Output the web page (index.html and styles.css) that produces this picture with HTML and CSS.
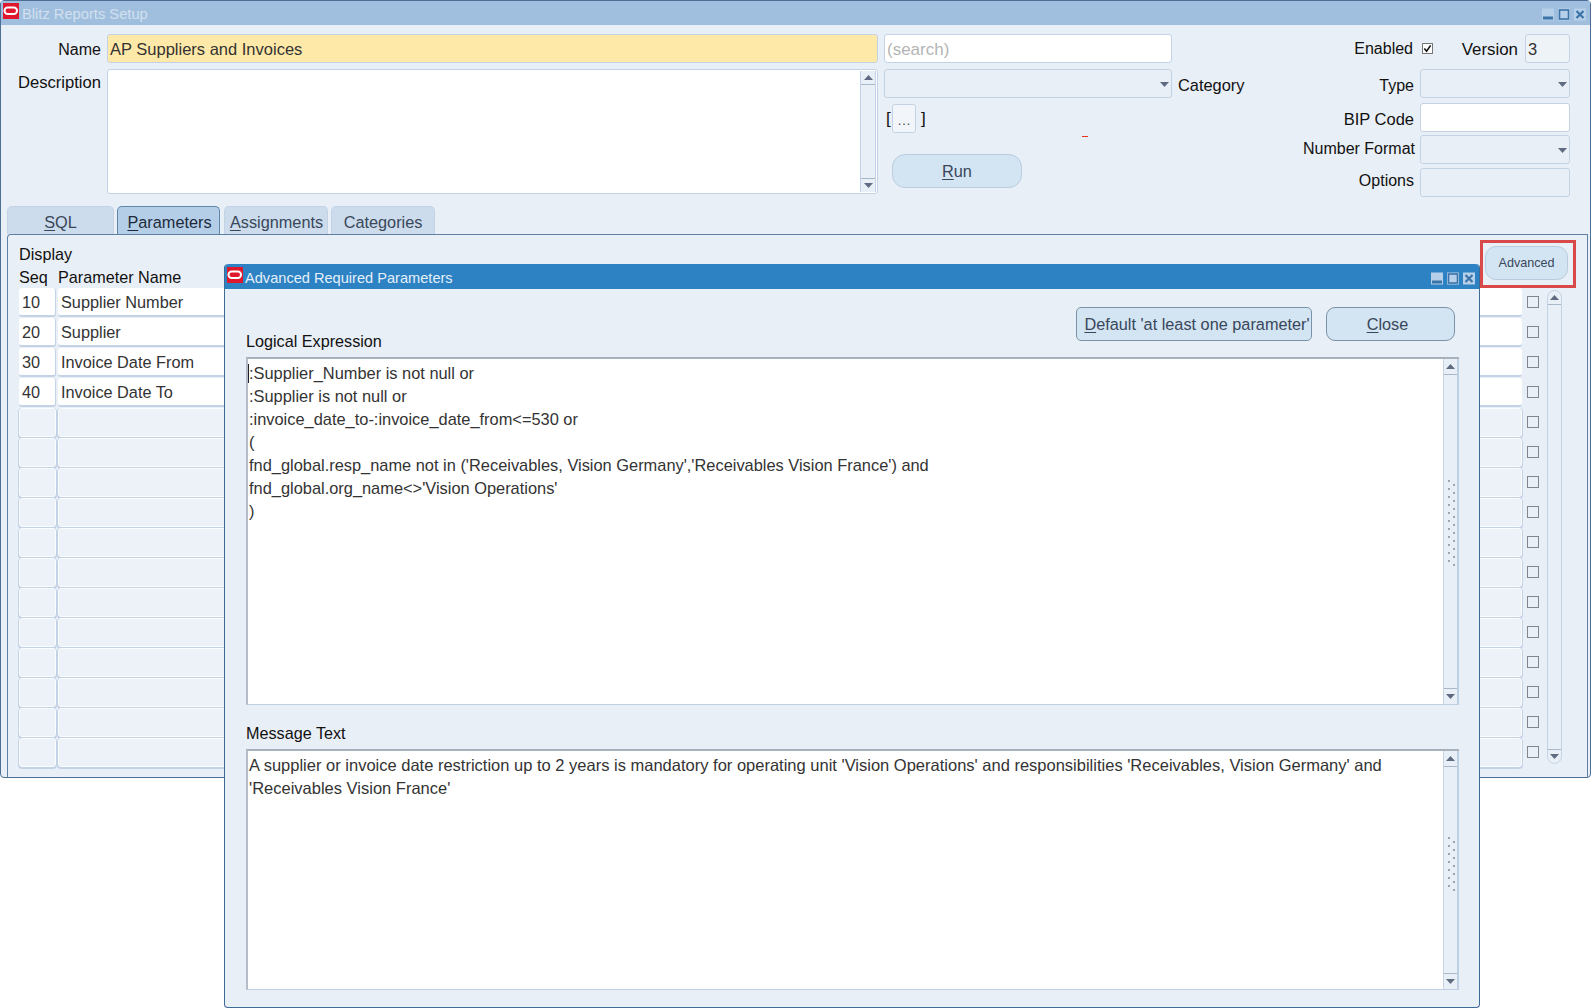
FILE: index.html
```html
<!DOCTYPE html>
<html lang="en">
<head>
<meta charset="utf-8">
<title>Blitz Reports Setup</title>
<link rel="stylesheet" href="styles.css">
</head>
<body>
<svg class="defs" width="0" height="0" aria-hidden="true">
  <symbol id="logo" viewBox="0 0 16 16"><rect width="16" height="16" fill="#e0182d"/><rect x="1.500" y="4.500" width="12.500" height="6.500" rx="3.200" fill="none" stroke="#fff" stroke-width="2"/></symbol>
  <symbol id="up" viewBox="0 0 9 5"><path d="M4.5 0L9 5H0z" fill="#5f6b80"/></symbol>
  <symbol id="down" viewBox="0 0 9 5"><path d="M0 0H9L4.500 5z" fill="#5f6b80"/></symbol>
  <symbol id="wmin" viewBox="0 0 12 12"><rect width="12" height="12" fill="#b6d0ea"/><rect x="1" y="8" width="10" height="3" fill="#3c74a8"/></symbol>
  <symbol id="wmax" viewBox="0 0 12 12"><rect width="12" height="12" fill="#b6d0ea"/><rect x="1.500" y="1.500" width="9" height="9" fill="none" stroke="#3c74a8" stroke-width="1.600"/></symbol>
  <symbol id="wclose" viewBox="0 0 12 12"><rect width="12" height="12" fill="#b6d0ea"/><path d="M2.500 2.500l7 7m0-7l-7 7" stroke="#3c74a8" stroke-width="2.200"/></symbol>
</svg>

<main class="window">
  <header class="titlebar">
    <svg class="logo"><use href="#logo"/></svg>
    <span class="title-text">Blitz Reports Setup</span>
    <span class="controls">
      <svg class="ctl"><use href="#wmin"/></svg><svg class="ctl"><use href="#wmax"/></svg><svg class="ctl"><use href="#wclose"/></svg>
    </span>
  </header>

  <section class="form">
    <div class="col-left">
      <div class="row-name">
        <label class="lbl lbl-left">Name</label>
        <div class="field field-yellow field-main">AP Suppliers and Invoices</div>
      </div>
      <div class="row-desc">
        <label class="lbl lbl-left lbl-desc">Description</label>
        <div class="field field-white field-main field-desc">
          <div class="vscroll vscroll-small">
            <span class="sb-btn sb-top"><svg class="arrow"><use href="#up"/></svg></span>
            <span class="sb-track"></span>
            <span class="sb-btn sb-bottom"><svg class="arrow"><use href="#down"/></svg></span>
          </div>
        </div>
      </div>
    </div>

    <div class="col-mid">
      <div class="field field-white field-search">(search)</div>
      <div class="row-cat">
        <div class="field field-select field-cat"><svg class="caret"><use href="#down"/></svg></div>
        <label class="lbl lbl-cat">Category</label>
      </div>
      <div class="row-browse">
        <span class="bracket">[</span>
        <span class="browse">…</span>
        <span class="bracket">]</span>
        <span class="red-dash"></span>
      </div>
      <button class="btn btn-run"><u>R</u>un</button>
    </div>

    <div class="col-right">
      <div class="row-top">
        <label class="lbl lbl-enabled">Enabled</label>
        <span class="check-on"><svg viewBox="0 0 10 10"><path d="M1.500 5l2.500 3 4.500-6.500" fill="none" stroke="#111" stroke-width="1.800"/></svg></span>
        <label class="lbl lbl-version">Version</label>
        <div class="field field-version">3</div>
      </div>
      <div class="row-r r-type"><label class="lbl">Type</label><div class="field field-select field-r"><svg class="caret"><use href="#down"/></svg></div></div>
      <div class="row-r r-bip"><label class="lbl">BIP Code</label><div class="field field-white field-r"></div></div>
      <div class="row-r r-num"><label class="lbl lbl-num">Number Format</label><div class="field field-select field-r"><svg class="caret"><use href="#down"/></svg></div></div>
      <div class="row-r r-opt"><label class="lbl">Options</label><div class="field field-r"></div></div>
    </div>
  </section>

  <nav class="tabs">
    <span class="tab tab-sql"><u>S</u>QL</span>
    <span class="tab tab-params tab-active"><u>P</u>arameters</span>
    <span class="tab tab-assign"><u>A</u>ssignments</span>
    <span class="tab tab-cats">Categories</span>
  </nav>

  <section class="pane">
    <div class="pane-head">
      <div class="heads">
        <div class="lbl-display">Display</div>
        <div class="col-heads"><span class="h-seq">Seq</span><span>Parameter Name</span></div>
      </div>
      <div class="adv-box"><button class="btn btn-adv">Advanced</button></div>
    </div>
    <div class="table-area">
      <div class="rows">
        <div class="tr"><span class="td td-seq">10</span><span class="td td-name">Supplier Number</span><span class="chk"></span></div>
        <div class="tr"><span class="td td-seq">20</span><span class="td td-name">Supplier</span><span class="chk"></span></div>
        <div class="tr"><span class="td td-seq">30</span><span class="td td-name">Invoice Date From</span><span class="chk"></span></div>
        <div class="tr"><span class="td td-seq">40</span><span class="td td-name">Invoice Date To</span><span class="chk"></span></div>
        <div class="tr"><span class="td td-seq td-empty"></span><span class="td td-name td-empty"></span><span class="chk"></span></div>
        <div class="tr"><span class="td td-seq td-empty"></span><span class="td td-name td-empty"></span><span class="chk"></span></div>
        <div class="tr"><span class="td td-seq td-empty"></span><span class="td td-name td-empty"></span><span class="chk"></span></div>
        <div class="tr"><span class="td td-seq td-empty"></span><span class="td td-name td-empty"></span><span class="chk"></span></div>
        <div class="tr"><span class="td td-seq td-empty"></span><span class="td td-name td-empty"></span><span class="chk"></span></div>
        <div class="tr"><span class="td td-seq td-empty"></span><span class="td td-name td-empty"></span><span class="chk"></span></div>
        <div class="tr"><span class="td td-seq td-empty"></span><span class="td td-name td-empty"></span><span class="chk"></span></div>
        <div class="tr"><span class="td td-seq td-empty"></span><span class="td td-name td-empty"></span><span class="chk"></span></div>
        <div class="tr"><span class="td td-seq td-empty"></span><span class="td td-name td-empty"></span><span class="chk"></span></div>
        <div class="tr"><span class="td td-seq td-empty"></span><span class="td td-name td-empty"></span><span class="chk"></span></div>
        <div class="tr"><span class="td td-seq td-empty"></span><span class="td td-name td-empty"></span><span class="chk"></span></div>
        <div class="tr"><span class="td td-seq td-empty"></span><span class="td td-name td-empty"></span><span class="chk"></span></div>
      </div>
      <div class="vscroll vscroll-table">
        <span class="sb-btn sb-top"><svg class="arrow"><use href="#up"/></svg></span>
        <span class="sb-track"></span>
        <span class="sb-btn sb-bottom"><svg class="arrow"><use href="#down"/></svg></span>
      </div>
    </div>
  </section>
</main>

<aside class="dialog">
  <header class="dlg-title">
    <svg class="logo"><use href="#logo"/></svg>
    <span class="dlg-title-text">Advanced Required Parameters</span>
    <span class="controls dlg-controls">
      <svg class="ctl"><use href="#wmin"/></svg><svg class="ctl"><use href="#wmax"/></svg><svg class="ctl"><use href="#wclose"/></svg>
    </span>
  </header>
  <div class="dlg-body">
    <div class="dlg-top">
      <div class="dlg-label dlg-label-first">Logical Expression</div>
      <button class="btn btn-default"><u>D</u>efault 'at least one parameter'</button>
      <button class="btn btn-close"><u>C</u>lose</button>
    </div>
    <div class="textbox textbox-logic">
      <div class="textbox-text"><span class="caret-bar"></span>:Supplier_Number is not null or<br>:Supplier is not null or<br>:invoice_date_to-:invoice_date_from&lt;=530 or<br>(<br>fnd_global.resp_name not in ('Receivables, Vision Germany','Receivables Vision France') and<br>fnd_global.org_name&lt;&gt;'Vision Operations'<br>)</div>
      <div class="vscroll vscroll-text">
        <span class="sb-btn sb-top"><svg class="arrow"><use href="#up"/></svg></span>
        <span class="sb-track sb-track-logic"><span class="dots dots-logic"></span></span>
        <span class="sb-btn sb-bottom"><svg class="arrow"><use href="#down"/></svg></span>
      </div>
    </div>
    <div class="dlg-label dlg-label-msg">Message Text</div>
    <div class="textbox textbox-msg">
      <div class="textbox-text">A supplier or invoice date restriction up to 2 years is mandatory for operating unit 'Vision Operations' and responsibilities 'Receivables, Vision Germany' and<br>'Receivables Vision France'</div>
      <div class="vscroll vscroll-text">
        <span class="sb-btn sb-top"><svg class="arrow"><use href="#up"/></svg></span>
        <span class="sb-track sb-track-msg"><span class="dots dots-msg"></span></span>
        <span class="sb-btn sb-bottom"><svg class="arrow"><use href="#down"/></svg></span>
      </div>
    </div>
  </div>
</aside>
</body>
</html>
```

FILE: styles.css
```css
* { box-sizing: border-box; }
html, body { margin: 0; padding: 0; background: #fff; }
body {
  position: relative;
  width: 1591px;
  height: 1008px;
  overflow: hidden;
  font: 16px/20px "Liberation Sans", Arial, sans-serif;
  color: #111;
}
.defs { position: absolute; }
u { text-underline-offset: 2px; }

.window {
  width: 1591px;
  height: 778px;
  background: #e9eff6;
  border: 1px solid #4d6f96;
  border-radius: 4px;
  display: flex;
  flex-direction: column;
}
.titlebar {
  height: 24px;
  background: #a0bfdf;
  display: flex;
  align-items: flex-start;
  flex: none;
  padding: 2px 0 0 2px;
}
.logo { width: 16px; height: 16px; flex: none; }
.title-text { color: #d3e0ee; margin: 1px 0 0 3px; line-height: 20px; font-size: 14.7px; }
.controls { margin-left: auto; display: flex; gap: 4px; margin-top: 5px; margin-right: 4px; }
.ctl { width: 12px; height: 13px; }

.form { display: flex; height: 181px; flex: none; }
.col-left { width: 877px; padding-top: 9px; flex: none; }
.row-name, .row-desc { display: flex; }
.row-desc { margin-top: 6px; }
.lbl { line-height: 20px; white-space: nowrap; }
.lbl-left { width: 106px; padding-right: 6px; text-align: right; padding-top: 6px; }
.lbl-desc { padding-top: 4px; font-size: 16.6px; }
.field {
  border: 1px solid #c3d3e5;
  border-radius: 3px;
  height: 29px;
  padding: 4px 2px 2px;
  line-height: 21px;
  color: #333;
  position: relative;
  flex: none;
  display: flex;
  align-items: center;
  font-size: 16.5px;
}
.field-main { width: 771px; }
.field-yellow { background: #ffe9a8; }
.field-white { background: #fff; }
.field-desc { height: 125px; padding: 0; justify-content: flex-end; align-items: stretch; }

.vscroll { display: flex; flex-direction: column; width: 16px; flex: none; }
.sb-btn { height: 14px; flex: none; display: flex; align-items: center; justify-content: center; }
.sb-track { flex: 1; position: relative; }
.arrow { width: 9px; height: 5px; display: block; }
.sb-top { border-bottom: 1px solid #a9b8c9; border-radius: 8px 8px 0 0; }
.sb-bottom { border-top: 1px solid #a9b8c9; border-radius: 0 0 8px 8px; }
.vscroll-small { background: #e9eff6; border-left: 1px solid #c3d3e5; border-right: 1px solid #c3d3e5; margin: 1px 1px 1px 0; }
.vscroll-table { border: 1px solid #c3d3e5; border-radius: 8px; height: 474px; width: 15px; margin-left: 7px; margin-top: 2px; }
.vscroll-text { background: #e9eff6; border-left: 1px solid #c9d4e0; border-right: 2px solid #bccfe3; }
.vscroll-text .sb-btn { height: 16px; }

.col-mid { width: 419px; padding: 9px 0 0 6px; flex: none; }
.field-search { width: 288px; color: #b5b5b5; font-size: 17px; }
.row-cat { display: flex; margin-top: 6px; align-items: center; }
.field-select { justify-content: flex-end; padding-right: 0; }
.field-cat { width: 288px; }
.caret { width: 9px; height: 5px; margin-right: 2px; }
.lbl-cat { margin-left: 6px; padding-top: 3px; font-size: 16.4px; }
.row-browse { display: flex; margin-top: 6px; align-items: center; height: 29px; position: relative; }
.bracket { color: #111; width: 9px; margin-left: 2px; font-size: 17px; }
.browse {
  width: 24px; height: 29px;
  border: 1px solid #c3d3e5; border-radius: 3px;
  background: #f2f6fa;
  text-align: center; line-height: 30px; color: #555; font-size: 14px;
  margin: 0 3px 0 -3px;
}
.red-dash { position: absolute; left: 198px; top: 32px; width: 6px; height: 1px; background: #e8331c; }
.btn {
  font: 16.3px/20px "Liberation Sans", Arial, sans-serif;
  color: #39475a;
  background: #d3e4f3;
  border: 1px solid #b8cde0;
  padding: 0;
  display: block;
}
.btn-run { width: 130px; height: 34px; margin: 21px 0 0 8px; border-radius: 13px; }

.col-right { flex: 1; padding-top: 9px; position: relative; }
.row-top { display: flex; align-items: center; height: 29px; }
.lbl-enabled { width: 116px; text-align: right; }
.check-on {
  width: 11px; height: 11px; border: 1px solid #777; background: #fff;
  margin: -1px 0 0 9px; display: block; flex: none;
}
.check-on svg { display: block; width: 9px; height: 9px; }
.lbl-version { width: 85px; text-align: right; font-size: 16.9px; padding-top: 2px; }
.field-version { width: 45px; margin-left: 7px; background: #eef3f8; }
.row-r { display: flex; align-items: center; height: 29px; }
.row-r .lbl { width: 117px; text-align: right; flex: none; }
.field-r { width: 150px; margin-left: 6px; }
.r-type { margin-top: 6px; }
.r-type .lbl { padding-top: 4px; }
.r-bip { margin-top: 5px; }
.r-bip .lbl { padding-top: 2px; font-size: 16.5px; }
.r-num { margin-top: 3px; }
.r-opt { margin-top: 4px; }
.r-opt .lbl { margin-top: -4px; }
.row-r .lbl-num { width: 118px; margin-top: -2px; }
.r-num .field-r { margin-left: 5px; }

.tabs { display: flex; height: 28px; padding-left: 6px; flex: none; align-items: flex-end; }
.tab {
  height: 28px;
  border: 1px solid #c3d3e5; border-bottom: 0;
  border-radius: 5px 5px 0 0;
  background: #ccdcec;
  color: #39475a;
  text-align: center;
  line-height: 30px;
  flex: none;
  font-size: 16.3px;
}
.tab-sql { width: 107px; }
.tab-params { width: 103px; margin-left: 3px; }
.tab-assign { width: 104px; margin-left: 4px; padding-left: 1px; }
.tab-cats { width: 104px; margin-left: 3px; }
.tab-active { background: #b4cee8; border-color: #5f86ad; color: #1e2a3a; padding-left: 2px; }

.pane {
  margin: 0 2px 0 6px;
  flex: 1;
  border: 1px solid #5f80a3;
  border-radius: 4px 0 0 0;
  border-bottom: 0;
  display: flex;
  flex-direction: column;
  padding-left: 11px;
}
.pane-head { height: 53px; display: flex; flex: none; position: relative; font-size: 16.2px; }
.heads { flex: 1; }
.lbl-display { margin-top: 9px; }
.col-heads { margin-top: 3px; display: flex; }
.h-seq { width: 39px; }
.adv-box {
  width: 96px; height: 48px;
  border: 3px solid #d9494a;
  margin: 5px 11px 0 0;
  padding: 3px 0 0 2px;
  position: absolute; right: 0; top: 0;
}
.btn-adv { width: 83px; height: 34px; border-radius: 11px; font-size: 12.6px; }
.table-area { display: flex; }
.rows { width: 1521px; flex: none; }
.tr { display: flex; height: 30px; align-items: flex-start; }
.td {
  height: 29px; background: #fff;
  border-bottom: 2px solid #c3d3e5;
  border-radius: 3px;
  color: #333; line-height: 29px; padding-left: 3px; flex: none;
  font-size: 16.3px;
}
.td-seq { width: 37px; padding-left: 3px; border-right: 1px solid #c3d3e5; }
.td-name { width: 1464px; margin-left: 2px; }
.td-empty { background: #edf2f8; border: 1px solid #fbfcfd; box-shadow: 0 1px 0 1px #c3d3e5; }
.chk { width: 12px; height: 12px; border: 1px solid #808690; margin: 8px 0 0 5px; flex: none; }

.dialog {
  position: absolute;
  left: 224px; top: 264px;
  width: 1256px; height: 744px;
  background: #e9eff6;
  border: 1px solid #3d6a96;
  border-top: 0;
  border-radius: 4px;
  display: flex;
  flex-direction: column;
}
.dlg-title {
  height: 25px; background: #2d82c4; flex: none;
  display: flex; align-items: flex-start; padding: 3px 0 0 2px;
  border-radius: 4px 4px 0 0;
}
.dlg-title-text { color: #e4eff8; margin: 1px 0 0 2px; font-size: 14.6px; }
.dlg-controls { margin-right: 4px; margin-top: 5px; }
.dlg-body { flex: 1; padding: 0 0 0 21px; }
.dlg-top { display: flex; height: 68px; position: relative; }
.dlg-label { white-space: nowrap; font-size: 16.2px; }
.dlg-label-first { margin-top: 42px; }
.btn-default { position: absolute; left: 830px; top: 18px; width: 236px; height: 34px; border-radius: 5px; border-color: #7b93a9; padding-left: 6px; }
.btn-close { position: absolute; left: 1080px; top: 18px; width: 129px; height: 34px; border-radius: 9px; border-color: #7b93a9; padding-right: 6px; }
.textbox {
  width: 1213px; background: #fff;
  border-top: 2px solid #a8b2bd; border-left: 2px solid #b5bec8; border-bottom: 1px solid #bccfe3;
  display: flex;
}
.textbox-logic { height: 348px; }
.textbox-logic .textbox-text { font-size: 16.4px; }
.textbox-msg { height: 241px; }
.textbox-text { flex: 1; padding: 3px 0 0 1px; line-height: 23px; color: #333; position: relative; white-space: nowrap; font-size: 16.5px; }
.caret-bar { position: absolute; left: 0; top: 5px; width: 1px; height: 19px; background: #222; }
.dlg-label-msg { margin-top: 18px; height: 26px; line-height: 20px; }
.dots {
  position: absolute; left: 4px; width: 10px;
  background-image: radial-gradient(circle at 1px 1px, #9aa5b2 .7px, transparent 1px), radial-gradient(circle at 1px 1px, #9aa5b2 .7px, transparent 1px);
  background-size: 10px 8px, 10px 8px;
  background-position: 0 0, 5px 4px;
}
.dots-logic { top: 105px; height: 86px; }
.dots-msg { top: 70px; height: 56px; }
```
